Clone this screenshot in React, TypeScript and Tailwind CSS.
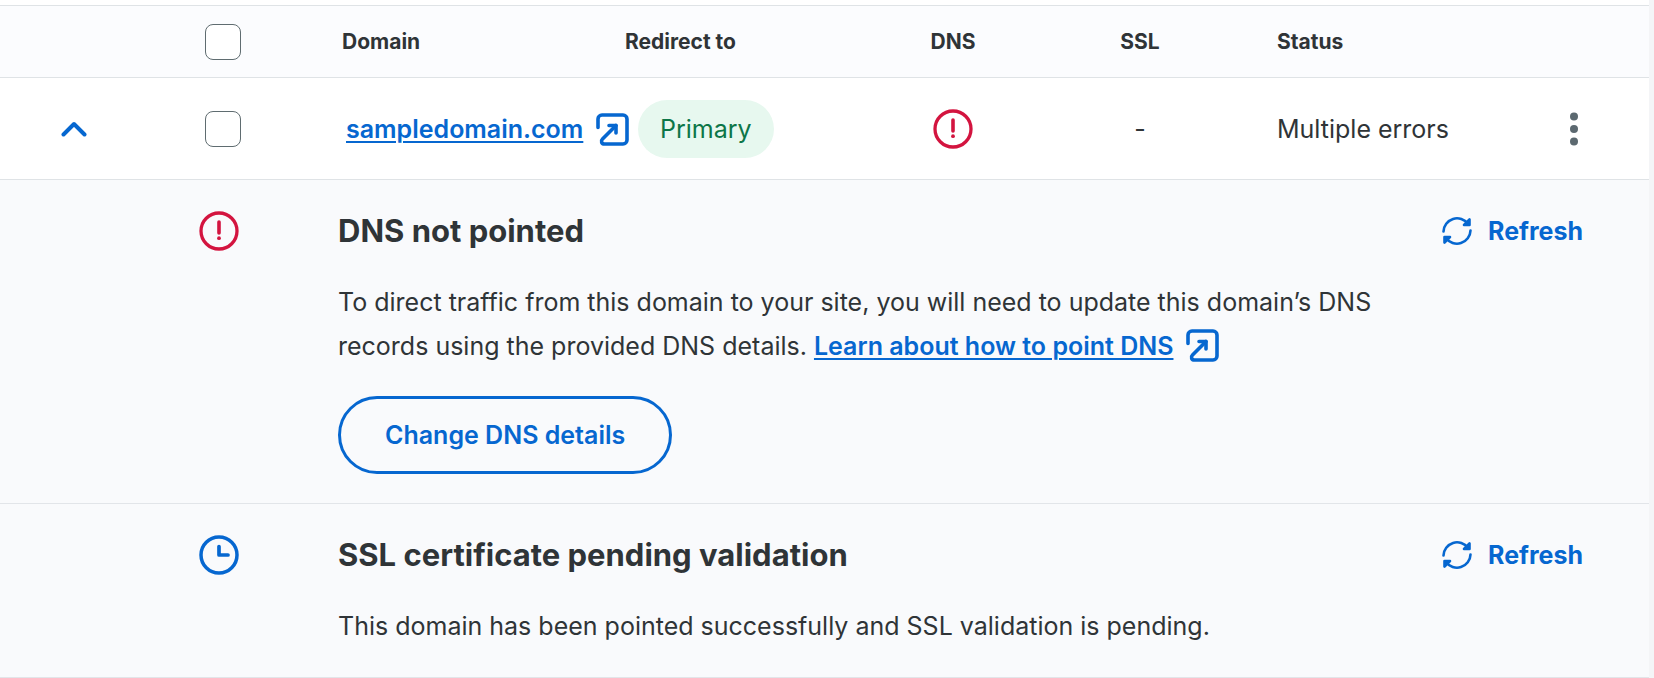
import { useState } from 'react';

export default function App() {
  const [isOpen, setIsOpen] = useState(true);

  return (
    <main className="bg-[#f4f5f7] pr-[5px] font-['Inter',sans-serif] text-[#2f3437]">
      <table className="w-full table-fixed border-collapse bg-white text-[25px] leading-[44px]">
        <colgroup>
          <col className="w-[148px]" />
          <col className="w-[150px]" />
          <col className="w-[327px]" />
          <col className="w-[233px]" />
          <col className="w-[190px]" />
          <col className="w-[184px]" />
          <col />
          <col className="w-[150px]" />
        </colgroup>
        <thead>
          <tr aria-hidden="true" className="h-[5px] border-b border-[#dfe3e6]">
            <td colSpan={8} className="p-0" />
          </tr>
          <tr className="h-[72px] border-b border-[#dfe3e6] bg-[#fbfcfe] text-left text-[21px]">
            <td />
            <td className="p-0 pt-0.5">
              <Checkbox label="Select all domains" />
            </td>
            <th className="p-0 pt-0.5 pl-11 font-bold">Domain</th>
            <th className="p-0 pt-0.5 font-bold">Redirect to</th>
            <th className="p-0 pt-0.5 text-center font-bold">DNS</th>
            <th className="p-0 pt-0.5 text-center font-bold">SSL</th>
            <th className="p-0 pt-0.5 pl-[45px] font-bold">Status</th>
            <td />
          </tr>
        </thead>
        <tbody>
          <tr className="h-[102px] border-b border-[#dfe3e6]">
            <td className="p-0 pt-0.5">
              <button
                type="button"
                aria-label="Toggle details"
                aria-expanded={isOpen}
                onClick={() => setIsOpen(!isOpen)}
                className="mx-auto block cursor-pointer p-2"
              >
                <Chevron className={isOpen ? '' : 'rotate-180'} />
              </button>
            </td>
            <td className="p-0 pt-0.5">
              <Checkbox label="Select sampledomain.com" />
            </td>
            <td className="p-0 pt-0.5 pl-12 whitespace-nowrap">
              <ExternalLink>sampledomain.com</ExternalLink>
            </td>
            <td className="p-0 pt-0.5 pl-[13px]">
              <span className="flex h-[58px] w-fit items-center rounded-full bg-[#e7f8ef] px-[22px] text-[#0d7648]">
                Primary
              </span>
            </td>
            <td className="p-0 pt-0.5">
              <ErrorIcon className="mx-auto" />
            </td>
            <td className="p-0 pt-0.5 text-center">-</td>
            <td className="p-0 pt-0.5 pl-[45px]">Multiple errors</td>
            <td className="p-0 pt-0.5">
              <button type="button" aria-label="More actions" className="mx-auto block cursor-pointer p-2">
                <Dots />
              </button>
            </td>
          </tr>
          {isOpen && (
            <>
              <DetailRow icon={<ErrorIcon />} title="DNS not pointed">
                <p className="mt-[27px] max-w-[1070px]">
                  To direct traffic from this domain to your site, you will need to update this domain’s DNS records
                  using the provided DNS details. <ExternalLink>Learn about how to point DNS</ExternalLink>
                </p>
                <button
                  type="button"
                  className="mt-7 block h-[78px] cursor-pointer rounded-full border-3 border-[#0667d0] px-11 font-semibold text-[#0667d0]"
                >
                  Change DNS details
                </button>
              </DetailRow>
              <DetailRow icon={<ClockIcon />} title="SSL certificate pending validation">
                <p className="mt-[27px]">
                  This domain has been pointed successfully and SSL validation is pending.
                </p>
              </DetailRow>
            </>
          )}
        </tbody>
      </table>
    </main>
  );
}

type DetailRowProps = {
  icon: React.ReactNode;
  title: string;
  children: React.ReactNode;
};

const DetailRow = ({ icon, title, children }: DetailRowProps) => (
  <tr className="border-b border-[#e2e5e9] bg-[#f9fafc] align-top">
    <td />
    <td className="p-0 pt-[31px] pl-[51px]">{icon}</td>
    <td colSpan={6} className="pt-[29px] pr-[66px] pb-[29px] pl-10">
      <div className="flex items-center justify-between">
        <h2 className="text-[31px] font-bold">{title}</h2>
        <button type="button" className="flex cursor-pointer items-center gap-4 font-bold text-[#0667d0]">
          <RefreshIcon />
          Refresh
        </button>
      </div>
      {children}
    </td>
  </tr>
);

const Checkbox = ({ label }: { label: string }) => (
  <input
    type="checkbox"
    aria-label={label}
    className="mx-auto block size-9 appearance-none rounded-lg border border-[#5f6c70] bg-white checked:bg-[#0667d0]"
  />
);

const ExternalLink = ({ children }: { children: React.ReactNode }) => (
  <a href="#" className="inline-flex items-center gap-[13px] whitespace-nowrap font-semibold text-[#0667d0]">
    <span className="underline decoration-2 underline-offset-3">{children}</span>
    <svg className="size-[33px]" viewBox="0 0 33 33" fill="none" stroke="currentColor" strokeWidth="3.6" strokeLinecap="round" strokeLinejoin="round">
      <path d="M2 14.5V6a4 4 0 0 1 4-4h21a4 4 0 0 1 4 4v21a4 4 0 0 1-4 4H8.500c-3 0-4-3-2-5L20 12.5" />
      <path d="M13 12.5h7V20" />
    </svg>
  </a>
);

const ErrorIcon = ({ className = '' }: { className?: string }) => (
  <svg className={`block size-10 text-[#d3143f] ${className}`} viewBox="0 0 40 40" fill="none" stroke="currentColor" strokeLinecap="round">
    <circle cx="20" cy="20" r="18" strokeWidth="3.3" />
    <path d="M20 11v11" strokeWidth="3.6" />
    <circle cx="20" cy="27.2" r="1.9" fill="currentColor" stroke="none" />
  </svg>
);

const ClockIcon = () => (
  <svg className="block size-10 text-[#0667d0]" viewBox="0 0 40 40" fill="none" stroke="currentColor" strokeLinecap="round" strokeLinejoin="round">
    <circle cx="20" cy="20" r="18" strokeWidth="3.5" />
    <path d="M20 11.5V20h9" strokeWidth="3.7" />
  </svg>
);

const RefreshIcon = () => (
  <svg className="size-[30px]" viewBox="0 0 30 30" fill="none" stroke="currentColor" strokeWidth="2.6" strokeLinecap="round" strokeLinejoin="round">
    <path d="M1.5 15.5A13.5 13.5 0 0 1 26 8" />
    <path d="M27.5 3.5V9H22z" />
    <path d="M28.5 14.5A13.5 13.5 0 0 1 4 22" />
    <path d="M2.5 26.5V21H8z" />
  </svg>
);

const Chevron = ({ className }: { className: string }) => (
  <svg className={`h-4 w-[26px] text-[#0667d0] ${className}`} viewBox="0 0 26 16" fill="none" stroke="currentColor" strokeWidth="4" strokeLinecap="round" strokeLinejoin="round">
    <path d="M2.5 13.5 13 3l10.5 10.5" />
  </svg>
);

const Dots = () => (
  <svg className="h-[34px] w-2 text-[#5c6970]" viewBox="0 0 8 34" fill="currentColor">
    <circle cx="4" cy="4.5" r="4" />
    <circle cx="4" cy="17" r="4" />
    <circle cx="4" cy="29.5" r="4" />
  </svg>
);
